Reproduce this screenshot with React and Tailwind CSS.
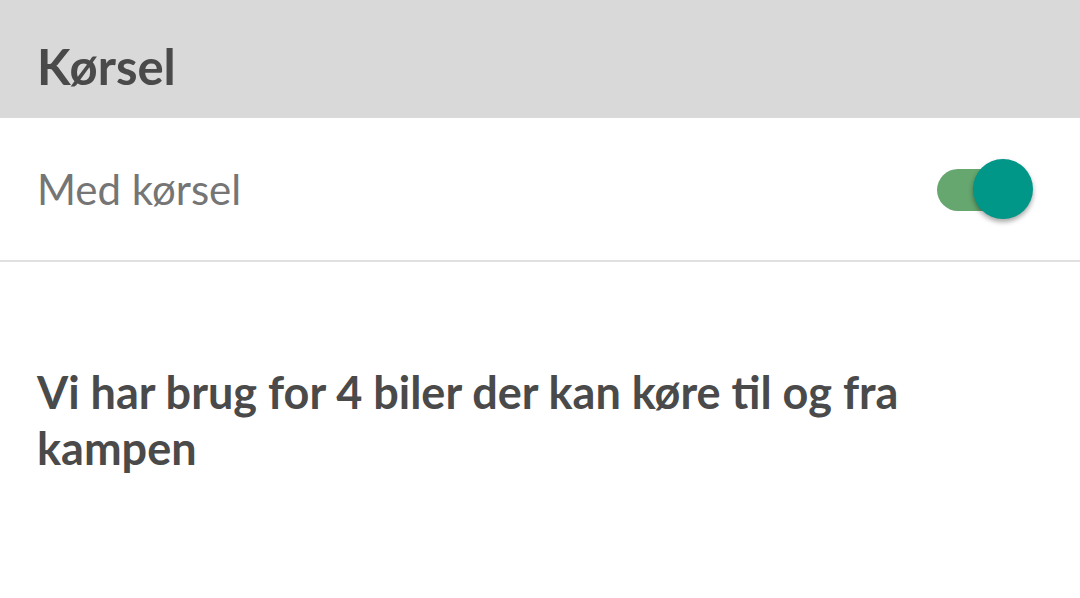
export default function App() {
  return (
    <div className="w-[1080px] h-[598px] bg-white font-['Lato',sans-serif] overflow-hidden">
      <div className="h-[118px] bg-[#d9d9d9] flex items-center px-[37px]">
        <h1 className="text-[49px] font-bold text-[#4a4a4a] leading-none pt-[14px]">Kørsel</h1>
      </div>
      <div className="h-[144px] flex items-center justify-between px-[37px] border-b-2 border-[#e0e0e0]">
        <span className="text-[42px] text-[#757575] leading-none">Med kørsel</span>
        <div className="relative w-[96px] h-[62px] mr-[10px] mt-[2px]">
          <div className="absolute left-0 top-[10px] w-[82px] h-[42px] rounded-full bg-[#66a66f]" />
          <div className="absolute right-0 top-0 w-[60px] h-[60px] rounded-full bg-[#009688] shadow-[0_3px_5px_rgba(0,0,0,0.35)]" />
        </div>
      </div>
      <p className="mt-[102px] px-[37px] text-[45px] font-bold leading-[56px] text-[#4a4a4a]">
        Vi har brug for 4 biler der kan køre til og fra kampen
      </p>
    </div>
  );
}
